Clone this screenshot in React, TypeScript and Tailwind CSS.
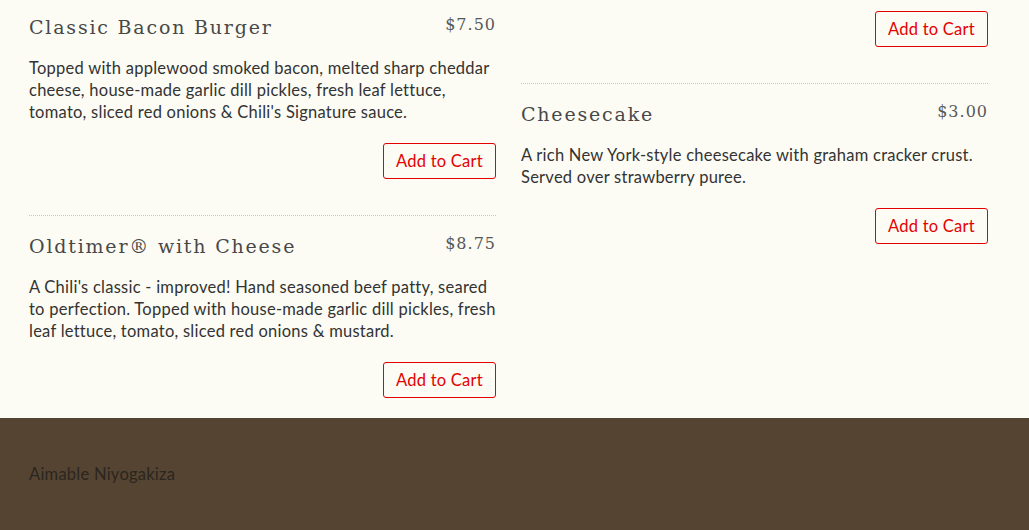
import React from "react"

type Item = { name: string; price: string; desc: string }

const left: Item[] = [
  {
    name: "Classic Bacon Burger",
    price: "$7.50",
    desc: "Topped with applewood smoked bacon, melted sharp cheddar cheese, house-made garlic dill pickles, fresh leaf lettuce, tomato, sliced red onions & Chili's Signature sauce.",
  },
  {
    name: "Oldtimer® with Cheese",
    price: "$8.75",
    desc: "A Chili's classic - improved! Hand seasoned beef patty, seared to perfection. Topped with house-made garlic dill pickles, fresh leaf lettuce, tomato, sliced red onions & mustard.",
  },
]

const right: Item[] = [
  {
    name: "Cheesecake",
    price: "$3.00",
    desc: "A rich New York-style cheesecake with graham cracker crust. Served over strawberry puree.",
  },
]

function CartButton() {
  return (
    <div className="flex justify-end">
      <button className="rounded-[3px] border border-[#e50000] px-3 py-[6px] text-[16.5px] leading-[22px] tracking-[0.25px] text-[#e50000]">
        Add to Cart
      </button>
    </div>
  )
}

function MenuItem({ item, first }: { item: Item; first?: boolean }) {
  return (
    <div
      className={
        first
          ? "pt-[13px]"
          : "mt-9 border-t border-dotted border-[#c8c8c0] pt-4"
      }
    >
      <div className="flex h-[28px] items-start justify-between">
        <h3 className="font-['DejaVu_Serif',serif] text-[19px] leading-[28px] tracking-[1.8px] text-[#484848]">
          {item.name}
        </h3>
        <span className="font-['DejaVu_Serif',serif] text-[16px] leading-[24px] tracking-[1px] text-[#585858]">
          {item.price}
        </span>
      </div>
      <p className="mt-4 text-[16.5px] leading-[22px] tracking-[0.25px] text-[#333]">
        {item.desc}
      </p>
      <div className="mt-5">
        <CartButton />
      </div>
    </div>
  )
}

export default function App() {
  return (
    <div className="min-h-screen bg-[#fcfcf5] font-['Lato',sans-serif]">
      <main className="grid grid-cols-2 gap-[25px] pb-5 pl-[29px] pr-[41px]">
        <div>
          {left.map((item, i) => (
            <MenuItem key={item.name} item={item} first={i === 0} />
          ))}
        </div>
        <div>
          <div className="pt-[11px]">
            <CartButton />
          </div>
          {right.map((item) => (
            <MenuItem key={item.name} item={item} />
          ))}
        </div>
      </main>
      <footer className="h-[112px] bg-[#554431] px-[29px] pt-[45px]">
        <p className="text-[16.5px] leading-[22px] tracking-[0.25px] text-[#2b2620]">
          Aimable Niyogakiza
        </p>
      </footer>
    </div>
  )
}
